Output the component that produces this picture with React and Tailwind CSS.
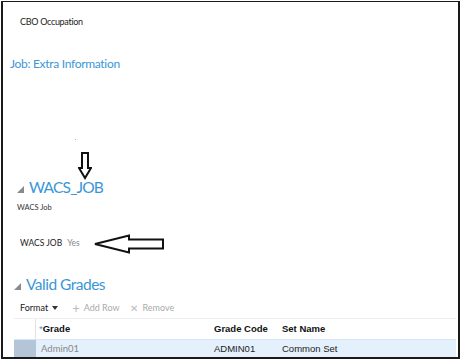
const DownArrow = () => (
  <svg width="14" height="28" viewBox="0 0 14 28" className="absolute left-[78px] top-[152px]">
    <path d="M4 1 H10 V16 H13 L7 26 L1 16 H4 Z" fill="none" stroke="#111" strokeWidth="2" />
  </svg>
);

const LeftArrow = () => (
  <svg width="72" height="20" viewBox="0 0 72 20" className="absolute left-[93px] top-[234px]">
    <path d="M2 10 L36 1.5 V5.5 H70 V14.5 H36 V18.5 Z" fill="none" stroke="#111" strokeWidth="2" />
  </svg>
);

const Collapse = () => (
  <span className="inline-block w-0 h-0 border-l-[7px] border-l-transparent border-b-[7px] border-b-[#8a8a8a] mr-[5px] mt-[3px]" />
);

const App = () => {
  return (
    <div className="w-[461px] h-[360px] bg-white relative" style={{ fontFamily: 'Lato, "Open Sans", sans-serif' }}>
      <div className="absolute inset-0 m-[1px] border-l-2 border-t border-r-2 border-b-2 border-[#1a1a1a] pointer-events-none" />
      <div className="flex flex-col h-full pt-[15px] pl-[3px] pr-[4px]">
        <div className="pl-[17px] h-[14px] flex items-center text-[9px] tracking-[-0.3px] text-[#222]">CBO Occupation</div>

        <div className="pl-[7px] mt-[26px] h-[18px] flex items-center text-[12px] tracking-[-0.3px] text-[#3b96d6]">Job: Extra Information</div>

        <div className="h-[104px] relative">
          <span className="absolute left-[72px] top-[66px] w-[1px] h-[1px] bg-[#9bb]" />
        </div>

        <div className="pl-[14px] h-[22px] flex items-center">
          <Collapse />
          <span className="text-[15.5px] tracking-[-0.8px] text-[#3b96d6] leading-none">WACS_JOB</span>
        </div>
        <div className="pl-[14px] mt-[4px] h-[10px] flex items-center text-[7.5px] text-[#333]">WACS Job</div>

        <div className="pl-[17px] mt-[24px] h-[12px] flex items-center gap-[5px] text-[8.5px]">
          <span className="text-[#222]">WACS JOB</span>
          <span className="text-[#888]">Yes</span>
        </div>

        <div className="pl-[11px] mt-[25px] h-[22px] flex items-center">
          <Collapse />
          <span className="text-[15.5px] tracking-[-0.5px] text-[#3b96d6] leading-none">Valid Grades</span>
        </div>

        <div className="pl-[17px] mt-[5px] h-[14px] flex items-center text-[9px]">
          <span className="text-[#222]">Format</span>
          <span className="ml-[4px] w-0 h-0 border-l-[3.5px] border-r-[3.5px] border-t-[4px] border-l-transparent border-r-transparent border-t-[#333]" />
          <span className="ml-[14px] text-[#bbb] text-[13px] leading-none">+</span>
          <span className="ml-[4px] text-[#aaa]">Add Row</span>
          <span className="ml-[10px] text-[#bbb] text-[10px] leading-none">✕</span>
          <span className="ml-[5px] text-[#aaa]">Remove</span>
        </div>

        <div className="mt-[3px] ml-[11px] mr-[1px] border-t border-[#eee] text-[9.5px]" style={{ fontFamily: '"Liberation Sans", Arial, sans-serif' }}>
          <div className="flex h-[20px] items-center">
            <div className="w-[22px] self-stretch border-r border-[#e2e2e2]" />
            <div className="w-[178px] pl-[3px] font-bold text-[#111]"><span className="text-[#3b96d6] font-normal">*</span>Grade</div>
            <div className="w-[68px] font-bold text-[#111]">Grade Code</div>
            <div className="font-bold text-[#111]">Set Name</div>
          </div>
          <div className="flex h-[19px] items-center bg-[#e4f1fd] border-t border-[#d6e6f5]">
            <div className="w-[22px] self-stretch bg-[#b3c5d6]" />
            <div className="w-[178px] pl-[5px] text-[#888]" style={{ fontFamily: 'Lato, sans-serif' }}>Admin01</div>
            <div className="w-[68px] text-[#222]">ADMIN01</div>
            <div className="text-[#222]">Common Set</div>
          </div>
        </div>
      </div>
      <DownArrow />
      <LeftArrow />
    </div>
  );
};

export default App;
